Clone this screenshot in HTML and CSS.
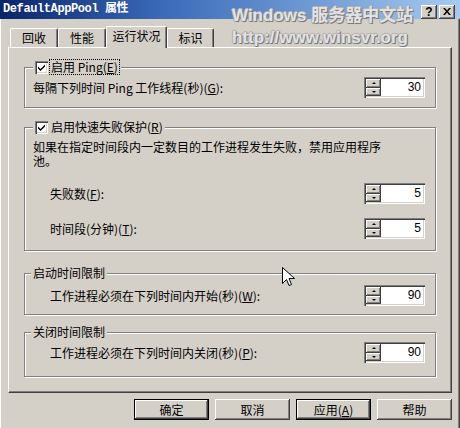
FILE: index.html
```html
<!DOCTYPE html>
<html lang="zh-CN">
<head>
<meta charset="utf-8">
<title>DefaultAppPool 属性</title>
<link rel="stylesheet" href="styles.css">
</head>
<body>
<div class="window">
  <div class="titlebar">
    <span class="title">DefaultAppPool 属性</span>
    <div class="tb-buttons">
      <span class="tb-btn help">?</span>
      <span class="tb-btn"><svg width="8" height="7" viewBox="0 0 8 7"><path d="M0 0h2l2 2.5L6 0h2L5 3.5 8 7H6L4 4.5 2 7H0l3-3.5z" fill="#000"/></svg></span>
    </div>
  </div>

  <div class="tabs">
    <div class="tab">回收</div>
    <div class="tab">性能</div>
    <div class="tab active">运行状况</div>
    <div class="tab last">标识</div>
  </div>

  <div class="panel">
    <div class="group g1">
      <div class="legend check">
        <span class="cb"><svg width="9" height="9" viewBox="0 0 9 9"><path d="M1 3.5l2.5 2.5L8 1.5v2L3.5 8 1 5.5z" fill="#000"/></svg></span>
        <span class="focus">启用 Ping(<u>E</u>)</span>
      </div>
      <div class="row">
        <span class="label">每隔下列时间 Ping 工作线程(秒)(<u>G</u>):</span>
        <div class="spin"><div class="spin-btns"><span class="sb"><i class="up"></i></span><span class="sb"><i class="down"></i></span></div><span class="val">30</span></div>
      </div>
    </div>

    <div class="group g2">
      <div class="legend check">
        <span class="cb"><svg width="9" height="9" viewBox="0 0 9 9"><path d="M1 3.5l2.5 2.5L8 1.5v2L3.5 8 1 5.5z" fill="#000"/></svg></span>
        <span class="ltext">启用快速失败保护(<u>R</u>)</span>
      </div>
      <p class="desc">如果在指定时间段内一定数目的工作进程发生失败，禁用应用程序池。</p>
      <div class="row indent r1">
        <span class="label">失败数(<u>F</u>):</span>
        <div class="spin"><div class="spin-btns"><span class="sb"><i class="up"></i></span><span class="sb"><i class="down"></i></span></div><span class="val">5</span></div>
      </div>
      <div class="row indent r2">
        <span class="label">时间段(分钟)(<u>T</u>):</span>
        <div class="spin"><div class="spin-btns"><span class="sb"><i class="up"></i></span><span class="sb"><i class="down"></i></span></div><span class="val">5</span></div>
      </div>
    </div>

    <div class="group g3">
      <div class="legend plain">启动时间限制</div>
      <div class="row indent">
        <span class="label">工作进程必须在下列时间内开始(秒)(<u>W</u>):</span>
        <div class="spin"><div class="spin-btns"><span class="sb"><i class="up"></i></span><span class="sb"><i class="down"></i></span></div><span class="val">90</span></div>
      </div>
    </div>

    <div class="group g4">
      <div class="legend plain">关闭时间限制</div>
      <div class="row indent">
        <span class="label">工作进程必须在下列时间内关闭(秒)(<u>P</u>):</span>
        <div class="spin"><div class="spin-btns"><span class="sb"><i class="up"></i></span><span class="sb"><i class="down"></i></span></div><span class="val">90</span></div>
      </div>
    </div>
  </div>

  <div class="buttons">
    <button class="btn default">确定</button>
    <button class="btn">取消</button>
    <button class="btn default">应用(<u>A</u>)</button>
    <button class="btn">帮助</button>
  </div>

  <div class="watermark">
    <div>Windows 服务器中文站</div>
    <div>http://www.winsvr.org</div>
  </div>

  <svg class="cursor" width="13" height="21" viewBox="0 0 13 21"><path d="M0.5 0.5V16.5L4.5 12.5L7 18.5L9.5 17.5L7 11.5H12.5Z" fill="#fff" stroke="#000" stroke-width="1" stroke-linejoin="miter"/></svg>
</div>
</body>
</html>
```

FILE: styles.css
```css
* { box-sizing: border-box; }

html, body {
  margin: 0;
  padding: 0;
  background: #d4d0c8;
}

body {
  font-family: "Noto Sans CJK SC", "Liberation Sans", sans-serif;
  font-size: 12px;
  color: #000;
}

u { text-decoration: underline; text-underline-offset: 1px; }

.window {
  position: relative;
  width: 460px;
  height: 428px;
  overflow: hidden;
  background: #d4d0c8;
  box-shadow: inset 1px 0 0 #fff, inset -1px 0 0 #404040, inset -2px 0 0 #808080;
}

/* title bar */
.titlebar {
  height: 19px;
  display: flex;
  align-items: center;
  justify-content: space-between;
  background: linear-gradient(to right, #0a246a 0%, #3a6ab8 35%, #a6caf0 100%);
  padding: 0 5px 0 3px;
}

.title {
  color: #fff;
  font-family: "Liberation Mono", "Noto Sans CJK SC", monospace;
  font-weight: bold;
  font-size: 12px;
  line-height: 19px;
  letter-spacing: -0.4px;
}

.tb-buttons {
  display: flex;
  gap: 2px;
  margin-top: 4px;
}

.tb-btn {
  width: 16px;
  height: 14px;
  display: flex;
  align-items: center;
  justify-content: center;
  background: #d4d0c8;
  box-shadow: inset -1px -1px 0 #404040, inset 1px 1px 0 #fff, inset -2px -2px 0 #808080;
  font-family: "Liberation Sans", sans-serif;
  font-weight: bold;
  font-size: 12px;
  line-height: 14px;
}

/* tabs */
.tabs {
  height: 28px;
  display: flex;
  align-items: flex-end;
  padding-left: 10px;
}

.tab {
  position: relative;
  width: 48px;
  height: 19px;
  display: flex;
  align-items: center;
  justify-content: center;
  border-top: 1px solid #fff;
  border-left: 1px solid #fff;
  border-right: 1px solid #404040;
  border-radius: 2px 2px 0 0;
  box-shadow: inset -1px 0 0 #808080;
  line-height: 14px;
}

.tab.active {
  width: 61px;
  height: 22px;
  margin-bottom: -1px;
  background: #d4d0c8;
  z-index: 2;
  padding-bottom: 3px;
}

.tab.last { width: 47px; }

/* panel */
.panel {
  margin: 0 8px;
  height: 346px;
  border-top: 1px solid #fff;
  border-left: 1px solid #fff;
  border-right: 1px solid #404040;
  border-bottom: 1px solid #404040;
  box-shadow: inset -1px -1px 0 #808080;
  padding: 19px 15px 0 15px;
  display: flex;
  flex-direction: column;
}

.group {
  border: 1px solid #808080;
  box-shadow: 1px 1px 0 #fff, inset 1px 1px 0 #fff;
  padding: 0 10px 9px 8px;
  display: flex;
  flex-direction: column;
}

.legend {
  align-self: flex-start;
  height: 14px;
  margin-top: -8px;
  display: flex;
  align-items: center;
  gap: 3px;
  background: #d4d0c8;
  padding: 0 2px;
  line-height: 14px;
}

.legend.plain { margin-left: -2px; }

.cb {
  width: 13px;
  height: 13px;
  background: #fff;
  box-shadow: inset 1px 1px 0 #808080, inset 2px 2px 0 #404040, inset -1px -1px 0 #fff, inset -2px -2px 0 #d4d0c8;
  display: flex;
  align-items: center;
  justify-content: center;
}

.focus {
  outline: 1px dotted #000;
  outline-offset: 0;
  padding: 0 1px;
  margin-left: -1px;
}

.row {
  height: 21px;
  display: flex;
  align-items: center;
  justify-content: space-between;
}

.row.indent { padding-left: 17px; }

.label { white-space: nowrap; }

.g1 .row { margin-top: 3px; }

.g2 { margin-top: 19px; padding-bottom: 11px; }
.g2 .desc {
  margin: 6px 0 0 0;
  line-height: 14px;
  padding-right: 40px;
}
.g2 .r1 { margin-top: 15px; }
.g2 .r2 { margin-top: 14px; }

.g3 { margin-top: 22px; padding-bottom: 8px; }
.g3 .row { margin-top: 5px; }

.g4 { margin-top: 17px; padding-bottom: 13px; }
.g4 .row { margin-top: 3px; }

/* spinner */
.spin {
  width: 61px;
  height: 21px;
  display: flex;
  padding: 2px;
  background: #fff;
  box-shadow: inset 1px 1px 0 #808080, inset 2px 2px 0 #404040, inset -1px -1px 0 #fff, inset -2px -2px 0 #d4d0c8;
}

.spin-btns {
  width: 15px;
  display: flex;
  flex-direction: column;
}

.sb {
  flex: 1;
  display: flex;
  align-items: center;
  justify-content: center;
  background: #d4d0c8;
  box-shadow: inset -1px -1px 0 #404040, inset 1px 1px 0 #fff, inset -2px -2px 0 #808080;
}

.sb i {
  width: 0;
  height: 0;
  border-left: 2px solid transparent;
  border-right: 2px solid transparent;
}
.sb i.up { border-bottom: 2px solid #000; }
.sb i.down { border-top: 2px solid #000; }

.val {
  flex: 1;
  text-align: right;
  padding-right: 2px;
  font-family: "Liberation Sans", sans-serif;
  font-size: 12px;
  line-height: 17px;
}

/* buttons */
.buttons {
  display: flex;
  justify-content: flex-end;
  gap: 6px;
  padding-right: 8px;
  margin-top: 6px;
}

.btn {
  width: 75px;
  height: 21px;
  margin: 0;
  padding: 0;
  border: none;
  background: #d4d0c8;
  font-family: "Noto Sans CJK SC", "Liberation Sans", sans-serif;
  font-size: 12px;
  color: #000;
  line-height: 19px;
  box-shadow: inset -1px -1px 0 #404040, inset 1px 1px 0 #fff, inset -2px -2px 0 #808080;
}

.btn.default {
  box-shadow: inset 0 0 0 1px #000, inset -2px -2px 0 #404040, inset 2px 2px 0 #fff, inset -3px -3px 0 #808080;
}

/* watermark */
.watermark {
  position: absolute;
  left: 232px;
  top: 5px;
  font-family: "Liberation Sans", "Noto Sans CJK SC", sans-serif;
  font-weight: bold;
  font-size: 17px;
  line-height: 22px;
  color: #e2e2e2;
  text-shadow: 1px 1px 0 #7a7a7a, -1px 0 0 #b4b4b4, 0 -1px 0 #b4b4b4, 1px 0 0 #999, 0 1px 0 #999, 0 0 2px rgba(120,120,120,0.6);
  pointer-events: none;
  z-index: 5;
}

.cursor {
  position: absolute;
  left: 282px;
  top: 267px;
  z-index: 6;
}
```
